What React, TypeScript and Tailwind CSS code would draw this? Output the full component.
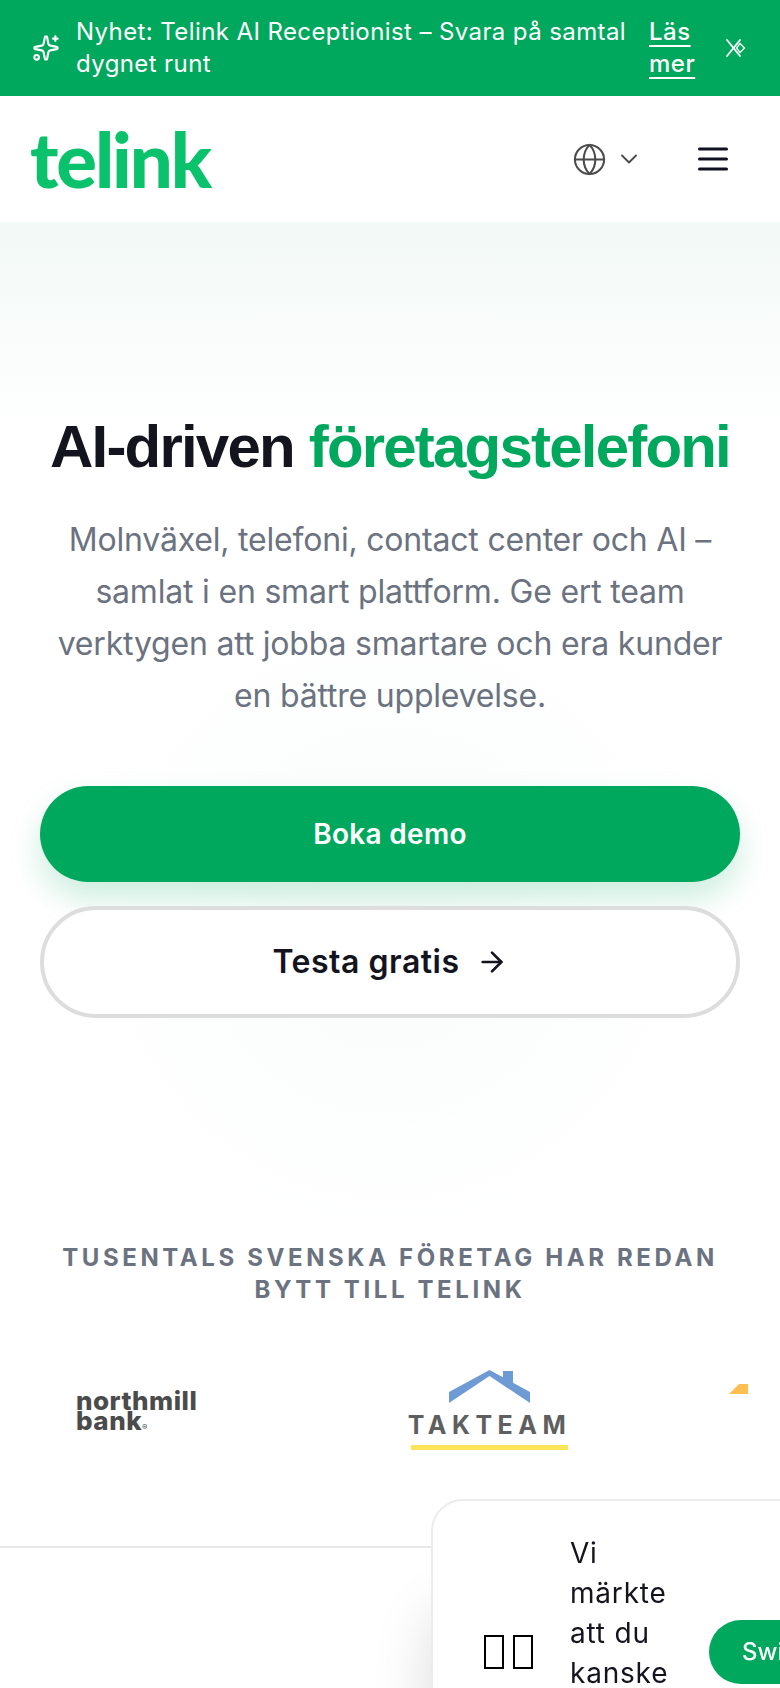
import { ChevronDown, ArrowRight, Globe, Sparkles } from 'lucide-react';

function CloseIcon() {
  return (
    <svg width="20" height="18" viewBox="0 0 20 18" fill="none" stroke="white" strokeWidth="1.8" strokeLinecap="round" className="shrink-0">
      <path d="M1 1l13 16M14 1L1 17" />
      <path d="M14 4.500l4.500 4.500-4.500 4.500-3.500-4.500z" strokeWidth="1.300" />
    </svg>
  );
}

function Banner() {
  return (
    <div className="h-[96px] bg-[#00a85d] flex items-center pl-[32px] pr-[34px] text-white">
      <Sparkles size={28} strokeWidth={1.800} className="shrink-0" />
      <p className="ml-[16px] w-[560px] shrink-0 text-[24px] leading-[32px] tracking-[0.4px]">
        Nyhet: Telink AI Receptionist – Svara på samtal dygnet runt
      </p>
      <a className="ml-[13px] w-[52px] text-[24px] leading-[32px] font-medium tracking-[0.5px] underline underline-offset-[5px]">Läs mer</a>
      <span className="ml-auto"><CloseIcon /></span>
    </div>
  );
}

function Header() {
  return (
    <header className="h-[126px] bg-white flex items-center pl-[30px] pr-[52px]">
      <span className="font-['Lato',sans-serif] font-black text-[76px] leading-none tracking-[-2.100px] text-[#0bc26c]">telink</span>
      <div className="ml-auto flex items-center">
        <Globe size={35} strokeWidth={1.400} className="text-[#4b4b4b]" />
        <ChevronDown size={28} strokeWidth={1.600} className="ml-[8px] text-[#4b4b4b]" />
        <svg width="30" height="24" viewBox="0 0 30 24" stroke="#0f1020" strokeWidth="3" strokeLinecap="round" className="ml-[55px]">
          <path d="M1.500 2h27M1.500 12h27M1.500 22h27" />
        </svg>
      </div>
    </header>
  );
}

function Hero() {
  return (
    <section className="h-[1002px] bg-[radial-gradient(circle_at_390px_700px,rgba(0,168,93,0.025),transparent_350px),linear-gradient(180deg,#f2f9f6_0px,#ffffff_210px)] flex flex-col items-center px-[40px] pt-[189px]">
      <h1 className="font-['Liberation_Sans',sans-serif] font-bold text-[60px] leading-[72px] tracking-[-1.800px] text-[#14141f] whitespace-nowrap">
        AI-driven <span className="text-[#00a85d]">företagstelefoni</span>
      </h1>
      <p className="mt-[31px] w-[680px] text-center text-[32px] leading-[52px] tracking-[-0.200px] text-[#6b7280]">
        Molnväxel, telefoni, contact center och AI – samlat i en smart plattform. Ge ert team verktygen att jobba smartare och era kunder en bättre upplevelse.
      </p>
      <button className="mt-[64px] w-full h-[96px] rounded-[48px] bg-[#00a85d] text-white text-[28px] font-semibold tracking-[0.3px] shadow-[0_16px_32px_rgba(0,168,93,0.2)]">
        Boka demo
      </button>
      <button className="mt-[24px] w-full h-[112px] rounded-[56px] bg-white border-[4px] border-[#dddddd] text-[#14141f] text-[32px] font-semibold tracking-[0.5px] flex items-center justify-center">
        Testa gratis
        <ArrowRight size={32} strokeWidth={2} className="ml-[16px]" />
      </button>
    </section>
  );
}

function Logos() {
  return (
    <section className="h-[324px] bg-white border-b-2 border-[#e8e8ea] overflow-hidden">
      <p className="mt-[18px] px-[40px] text-center text-[24px] leading-[32px] font-bold tracking-[3.600px] text-[#6b7280]">
        TUSENTALS SVENSKA FÖRETAG HAR REDAN BYTT TILL TELINK
      </p>
      <div className="mt-[64px] flex items-start">
        <div className="ml-[76px] mt-[21px] w-[130px] shrink-0 text-[#4b4b4b] font-extrabold text-[26px] leading-[20px] tracking-[0.500px]">
          northmill
          <br />
          bank<span className="text-[8px] font-normal">®</span>
        </div>
        <div className="ml-[205px] w-[157px] shrink-0 flex flex-col items-center">
          <svg width="81" height="33" viewBox="0 0 81 33">
            <path d="M0 33V22L40.500 0 54 7.300V1h10v11.800L81 22v11L40.500 6z" fill="#6f9bd4" />
          </svg>
          <span className="mt-[7px] text-[#5f5f5f] text-[25px] leading-[30px] font-bold tracking-[5.500px] whitespace-nowrap">TAKTEAM</span>
          <span className="mt-[5px] w-full h-[5px] bg-[#fbe35a]" />
        </div>
        <svg width="19" height="10" viewBox="0 0 19 10" className="ml-[161px] mt-[14px] shrink-0">
          <path d="M0 10L10 0h9v10z" fill="#fdbf50" />
        </svg>
      </div>
    </section>
  );
}

function Popup() {
  return (
    <div className="fixed left-[431px] top-[1499px] w-[500px] h-[400px] bg-white border-2 border-[#ececec] rounded-[32px] shadow-[0_110px_60px_rgba(0,0,0,0.14)] flex items-start pl-[51px] pt-[32px]">
      <div className="mt-[102px] flex gap-[9px] shrink-0">
        <span className="w-[20px] h-[34px] border-2 border-black" />
        <span className="w-[20px] h-[34px] border-2 border-black" />
      </div>
      <p className="ml-[37px] w-[110px] shrink-0 text-[#14141f] text-[28px] leading-[40px] tracking-[0.8px]">Vi märkte att du kanske</p>
      <button className="ml-[29px] mt-[87px] h-[64px] w-[200px] shrink-0 text-left pl-[33px] rounded-[32px] bg-[#00a85d] text-white text-[24px] font-medium">Switch</button>
    </div>
  );
}

export default function App() {
  return (
    <div className="font-['Inter',sans-serif] w-[780px] h-[1688px] overflow-hidden relative bg-white">
      <Banner />
      <Header />
      <Hero />
      <Logos />
      <Popup />
    </div>
  );
}
